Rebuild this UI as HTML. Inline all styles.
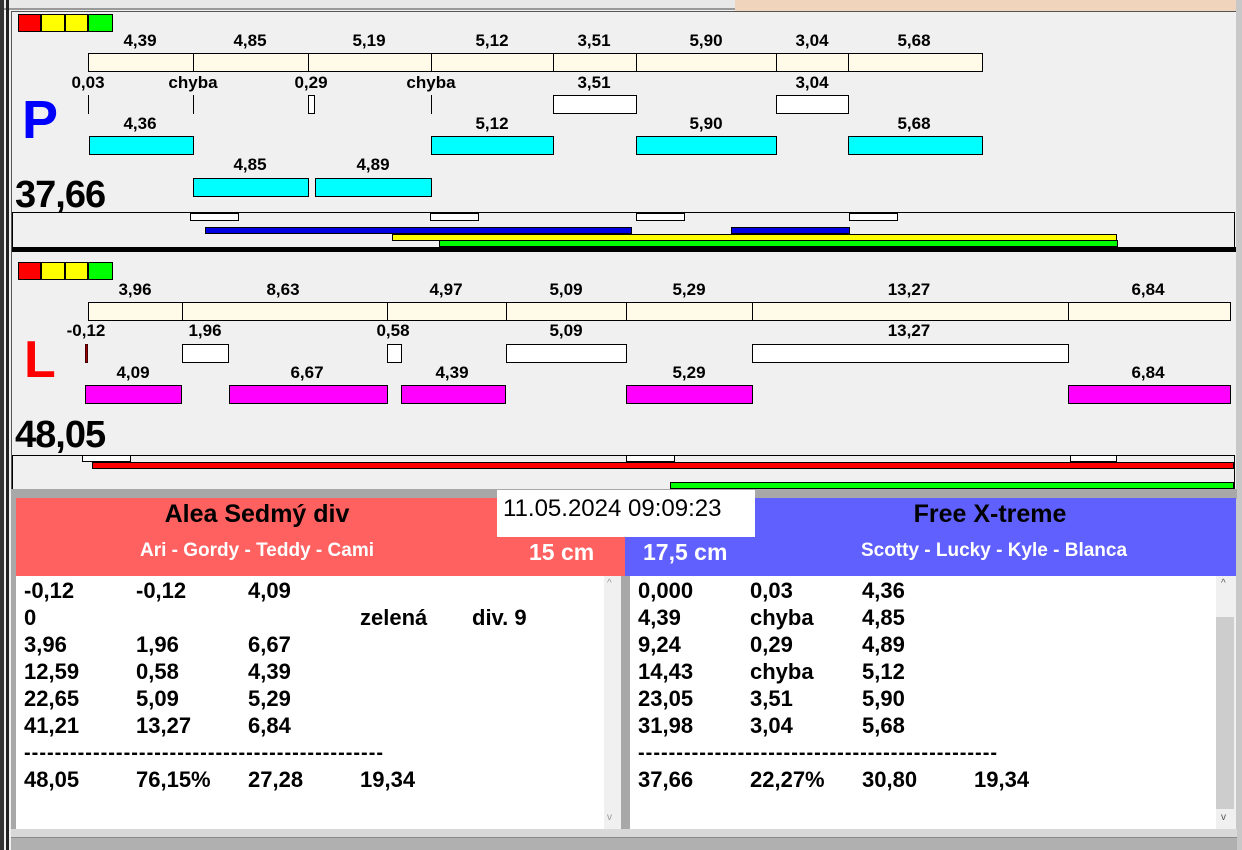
<!DOCTYPE html>
<html><head><meta charset="utf-8"><style>
*{margin:0;padding:0;box-sizing:border-box}
body{width:1242px;height:850px;background:#f0f0f0;position:relative;overflow:hidden;font-family:"Liberation Sans",Arial,sans-serif}
div{position:absolute}
.l{font-weight:bold;font-size:17px;width:120px;text-align:center;color:#000;line-height:20px}
.c{background:#fffbe8;border:1px solid #000;height:19px}
.w{background:#fff;border:1px solid #000;height:19px}
.cy{background:#00ffff;border:1px solid #000;height:19px}
.m{background:#ff00ff;border:1px solid #000;height:19px}
.t{font-weight:bold;font-size:22px;line-height:27px;white-space:pre}
</style></head><body>
<!-- top strip -->
<div style="left:0;top:0;width:735px;height:10px;background:#e8e8e8;border-bottom:2px solid #999"></div>
<div style="left:735px;top:0;width:502px;height:12px;background:#f0d4bc"></div>
<div style="left:0;top:0;width:4px;height:850px;background:#333"></div>
<div style="left:6px;top:0;width:3px;height:850px;background:#222"></div>
<div style="left:11px;top:11px;width:1226px;height:1px;background:#555"></div>
<div style="left:11px;top:11px;width:1px;height:480px;background:#555"></div>
<div style="left:1236px;top:0;width:6px;height:850px;background:#c8c8c8"></div>

<!-- P panel -->
<div style="left:18px;top:14px;width:23px;height:18px;background:#f00;border:1px solid #000"></div>
<div style="left:41px;top:14px;width:24px;height:18px;background:#ff0;border:1px solid #000"></div>
<div style="left:65px;top:14px;width:23px;height:18px;background:#ff0;border:1px solid #000"></div>
<div style="left:88px;top:14px;width:25px;height:18px;background:#0f0;border:1px solid #000"></div>

<div class="c" style="left:88px;top:53px;width:106px"></div>
<div class="c" style="left:193px;top:53px;width:116px"></div>
<div class="c" style="left:308px;top:53px;width:124px"></div>
<div class="c" style="left:431px;top:53px;width:123px"></div>
<div class="c" style="left:553px;top:53px;width:84px"></div>
<div class="c" style="left:636px;top:53px;width:141px"></div>
<div class="c" style="left:776px;top:53px;width:73px"></div>
<div class="c" style="left:848px;top:53px;width:135px"></div>
<div class="l" style="left:80px;top:31px">4,39</div>
<div class="l" style="left:190px;top:31px">4,85</div>
<div class="l" style="left:309px;top:31px">5,19</div>
<div class="l" style="left:432px;top:31px">5,12</div>
<div class="l" style="left:534px;top:31px">3,51</div>
<div class="l" style="left:646px;top:31px">5,90</div>
<div class="l" style="left:752px;top:31px">3,04</div>
<div class="l" style="left:854px;top:31px">5,68</div>

<div class="l" style="left:28px;top:73px">0,03</div>
<div class="l" style="left:133px;top:73px">chyba</div>
<div class="l" style="left:251px;top:73px">0,29</div>
<div class="l" style="left:371px;top:73px">chyba</div>
<div class="l" style="left:534px;top:73px">3,51</div>
<div class="l" style="left:752px;top:73px">3,04</div>
<div style="left:88px;top:95px;width:1px;height:19px;background:#000"></div>
<div style="left:193px;top:95px;width:1px;height:19px;background:#000"></div>
<div style="left:431px;top:95px;width:1px;height:19px;background:#000"></div>
<div class="w" style="left:308px;top:95px;width:7px"></div>
<div class="w" style="left:553px;top:95px;width:84px"></div>
<div class="w" style="left:776px;top:95px;width:73px"></div>

<div class="l" style="left:80px;top:114px">4,36</div>
<div class="l" style="left:432px;top:114px">5,12</div>
<div class="l" style="left:646px;top:114px">5,90</div>
<div class="l" style="left:854px;top:114px">5,68</div>
<div class="cy" style="left:89px;top:136px;width:105px"></div>
<div class="cy" style="left:431px;top:136px;width:123px"></div>
<div class="cy" style="left:636px;top:136px;width:141px"></div>
<div class="cy" style="left:848px;top:136px;width:135px"></div>
<div class="l" style="left:190px;top:155px">4,85</div>
<div class="l" style="left:313px;top:155px">4,89</div>
<div class="cy" style="left:193px;top:178px;width:116px"></div>
<div class="cy" style="left:315px;top:178px;width:117px"></div>

<div style="left:22px;top:88px;font-size:54px;font-weight:bold;color:#0000ff;line-height:64px">P</div>
<div style="left:15px;top:173px;font-size:38px;font-weight:bold;line-height:44px;letter-spacing:-1px">37,66</div>

<div style="left:12px;top:212px;width:1223px;height:36px;border:1px solid #000;border-bottom:none"></div>
<div class="w" style="left:190px;top:213px;width:49px;height:8px"></div>
<div class="w" style="left:430px;top:213px;width:49px;height:8px"></div>
<div class="w" style="left:636px;top:213px;width:49px;height:8px"></div>
<div class="w" style="left:849px;top:213px;width:49px;height:8px"></div>
<div style="left:205px;top:227px;width:427px;height:7px;background:#0000e0;border:1px solid #000"></div>
<div style="left:731px;top:227px;width:119px;height:7px;background:#0000e0;border:1px solid #000"></div>
<div style="left:392px;top:234px;width:725px;height:7px;background:#ff0;border:1px solid #000"></div>
<div style="left:439px;top:240px;width:679px;height:7px;background:#0f0;border:1px solid #000"></div>
<div style="left:12px;top:247px;width:1224px;height:5px;background:#000"></div>

<!-- L panel -->
<div style="left:18px;top:262px;width:23px;height:18px;background:#f00;border:1px solid #000"></div>
<div style="left:41px;top:262px;width:24px;height:18px;background:#ff0;border:1px solid #000"></div>
<div style="left:65px;top:262px;width:23px;height:18px;background:#ff0;border:1px solid #000"></div>
<div style="left:88px;top:262px;width:25px;height:18px;background:#0f0;border:1px solid #000"></div>

<div class="c" style="left:88px;top:302px;width:95px"></div>
<div class="c" style="left:182px;top:302px;width:206px"></div>
<div class="c" style="left:387px;top:302px;width:120px"></div>
<div class="c" style="left:506px;top:302px;width:121px"></div>
<div class="c" style="left:626px;top:302px;width:127px"></div>
<div class="c" style="left:752px;top:302px;width:317px"></div>
<div class="c" style="left:1068px;top:302px;width:163px"></div>
<div class="l" style="left:75px;top:280px">3,96</div>
<div class="l" style="left:223px;top:280px">8,63</div>
<div class="l" style="left:386px;top:280px">4,97</div>
<div class="l" style="left:506px;top:280px">5,09</div>
<div class="l" style="left:629px;top:280px">5,29</div>
<div class="l" style="left:849px;top:280px">13,27</div>
<div class="l" style="left:1088px;top:280px">6,84</div>

<div class="l" style="left:26px;top:321px">-0,12</div>
<div class="l" style="left:145px;top:321px">1,96</div>
<div class="l" style="left:333px;top:321px">0,58</div>
<div class="l" style="left:506px;top:321px">5,09</div>
<div class="l" style="left:849px;top:321px">13,27</div>
<div style="left:85px;top:344px;width:3px;height:19px;background:#a00000;border:1px solid #400"></div>
<div class="w" style="left:182px;top:344px;width:47px"></div>
<div class="w" style="left:387px;top:344px;width:15px"></div>
<div class="w" style="left:506px;top:344px;width:121px"></div>
<div class="w" style="left:752px;top:344px;width:317px"></div>

<div class="l" style="left:73px;top:363px">4,09</div>
<div class="l" style="left:247px;top:363px">6,67</div>
<div class="l" style="left:392px;top:363px">4,39</div>
<div class="l" style="left:629px;top:363px">5,29</div>
<div class="l" style="left:1088px;top:363px">6,84</div>
<div class="m" style="left:85px;top:385px;width:97px"></div>
<div class="m" style="left:229px;top:385px;width:159px"></div>
<div class="m" style="left:401px;top:385px;width:105px"></div>
<div class="m" style="left:626px;top:385px;width:127px"></div>
<div class="m" style="left:1068px;top:385px;width:163px"></div>

<div style="left:24px;top:330px;font-size:52px;font-weight:bold;color:#f00;line-height:60px">L</div>
<div style="left:15px;top:413px;font-size:38px;font-weight:bold;line-height:44px;letter-spacing:-1px">48,05</div>

<div style="left:12px;top:455px;width:1223px;height:34px;border:1px solid #000;border-bottom:none"></div>
<div class="w" style="left:82px;top:455px;width:49px;height:7px"></div>
<div class="w" style="left:626px;top:455px;width:49px;height:7px"></div>
<div class="w" style="left:1070px;top:455px;width:47px;height:7px"></div>
<div style="left:92px;top:462px;width:1142px;height:7px;background:#f00;border:1px solid #000"></div>
<div style="left:670px;top:482px;width:564px;height:7px;background:#0f0;border:1px solid #000"></div>

<!-- bottom -->
<div style="left:11px;top:489px;width:1226px;height:10px;background:#a8a8a8"></div>
<div style="left:11px;top:489px;width:5px;height:350px;background:#a8a8a8"></div>
<div style="left:16px;top:498px;width:609px;height:78px;background:#ff6060"></div>
<div style="left:625px;top:498px;width:611px;height:78px;background:#6060ff"></div>
<div style="left:625px;top:498px;width:130px;height:39px;background:#ff6060"></div>
<div style="left:497px;top:490px;width:258px;height:47px;background:#fff"></div>
<div style="left:503px;top:494px;font-size:24px;line-height:30px;color:#000">11.05.2024 09:09:23</div>
<div style="left:16px;top:499px;width:482px;text-align:center;font-size:25px;font-weight:bold;line-height:30px">Alea Sedmý div</div>
<div style="left:16px;top:539px;width:482px;text-align:center;font-size:19px;font-weight:bold;color:#fff;line-height:24px">Ari - Gordy - Teddy - Cami</div>
<div style="left:529px;top:538px;font-size:23px;font-weight:bold;color:#fff;line-height:28px">15 cm</div>
<div style="left:643px;top:538px;font-size:23px;font-weight:bold;color:#fff;line-height:28px">17,5 cm</div>
<div style="left:755px;top:499px;width:470px;text-align:center;font-size:25px;font-weight:bold;line-height:30px">Free X-treme</div>
<div style="left:755px;top:539px;width:478px;text-align:center;font-size:19px;font-weight:bold;color:#fff;line-height:24px">Scotty - Lucky - Kyle - Blanca</div>

<div style="left:16px;top:576px;width:605px;height:253px;background:#fff;border-right:1px solid #ccc"></div>
<div style="left:604px;top:576px;width:17px;height:253px;background:#f0f0f0"></div>
<div style="left:607px;top:578px;font-size:10px;color:#999">^</div>
<div style="left:607px;top:812px;font-size:10px;color:#999">v</div>
<div style="left:621px;top:576px;width:9px;height:253px;background:#a8a8a8"></div>
<div style="left:630px;top:576px;width:606px;height:253px;background:#fff"></div>
<div style="left:1216px;top:576px;width:20px;height:253px;background:#f0f0f0"></div>
<div style="left:1216px;top:617px;width:18px;height:192px;background:#cdcdcd"></div>
<div style="left:1221px;top:578px;font-size:10px;color:#555">^</div>
<div style="left:1221px;top:812px;font-size:10px;color:#555">v</div>
<div style="left:11px;top:829px;width:1226px;height:9px;background:#d8d8d8;border-bottom:1px solid #888"></div>
<div style="left:11px;top:838px;width:1226px;height:12px;background:#b0b0b0"></div>

<div class="t" style="left:24px;top:577px">-0,12</div><div class="t" style="left:136px;top:577px">-0,12</div><div class="t" style="left:248px;top:577px">4,09</div>
<div class="t" style="left:24px;top:604px">0</div><div class="t" style="left:360px;top:604px">zelená</div><div class="t" style="left:472px;top:604px">div. 9</div>
<div class="t" style="left:24px;top:631px">3,96</div><div class="t" style="left:136px;top:631px">1,96</div><div class="t" style="left:248px;top:631px">6,67</div>
<div class="t" style="left:24px;top:658px">12,59</div><div class="t" style="left:136px;top:658px">0,58</div><div class="t" style="left:248px;top:658px">4,39</div>
<div class="t" style="left:24px;top:685px">22,65</div><div class="t" style="left:136px;top:685px">5,09</div><div class="t" style="left:248px;top:685px">5,29</div>
<div class="t" style="left:24px;top:712px">41,21</div><div class="t" style="left:136px;top:712px">13,27</div><div class="t" style="left:248px;top:712px">6,84</div>
<div class="t" style="left:24px;top:740px;font-size:20px;letter-spacing:1px">-----------------------------------------------</div>
<div class="t" style="left:24px;top:766px">48,05</div><div class="t" style="left:136px;top:766px">76,15%</div><div class="t" style="left:248px;top:766px">27,28</div><div class="t" style="left:360px;top:766px">19,34</div>

<div class="t" style="left:638px;top:577px">0,000</div><div class="t" style="left:750px;top:577px">0,03</div><div class="t" style="left:862px;top:577px">4,36</div>
<div class="t" style="left:638px;top:604px">4,39</div><div class="t" style="left:750px;top:604px">chyba</div><div class="t" style="left:862px;top:604px">4,85</div>
<div class="t" style="left:638px;top:631px">9,24</div><div class="t" style="left:750px;top:631px">0,29</div><div class="t" style="left:862px;top:631px">4,89</div>
<div class="t" style="left:638px;top:658px">14,43</div><div class="t" style="left:750px;top:658px">chyba</div><div class="t" style="left:862px;top:658px">5,12</div>
<div class="t" style="left:638px;top:685px">23,05</div><div class="t" style="left:750px;top:685px">3,51</div><div class="t" style="left:862px;top:685px">5,90</div>
<div class="t" style="left:638px;top:712px">31,98</div><div class="t" style="left:750px;top:712px">3,04</div><div class="t" style="left:862px;top:712px">5,68</div>
<div class="t" style="left:638px;top:740px;font-size:20px;letter-spacing:1px">-----------------------------------------------</div>
<div class="t" style="left:638px;top:766px">37,66</div><div class="t" style="left:750px;top:766px">22,27%</div><div class="t" style="left:862px;top:766px">30,80</div><div class="t" style="left:974px;top:766px">19,34</div>
</body></html>
